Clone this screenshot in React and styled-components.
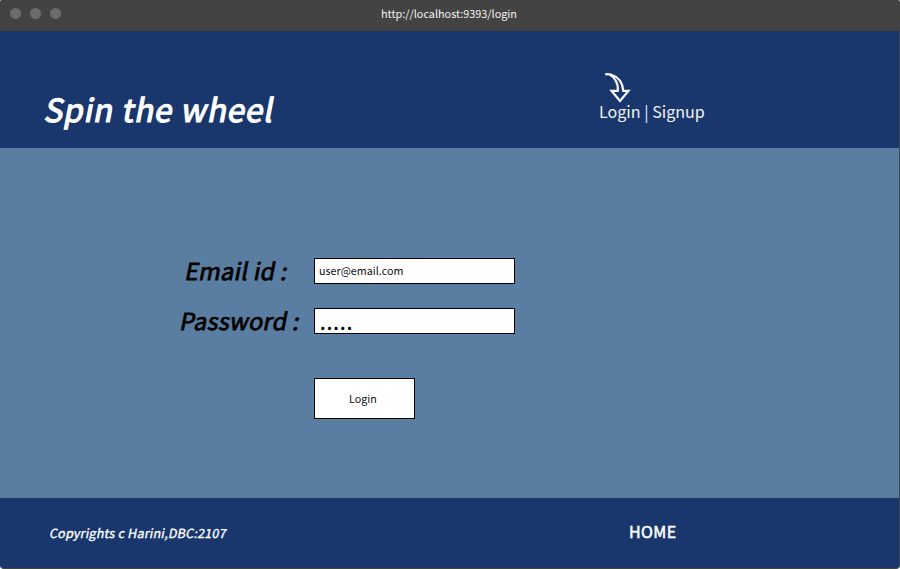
import React from "react";
import styled, { createGlobalStyle } from "styled-components";

const GlobalStyle = createGlobalStyle`
  * { box-sizing: border-box; }
  body { margin: 0; background: #fff; font-family: "Noto Sans CJK SC", "Noto Sans", sans-serif; }
`;

const Window = styled.div`
  width: 900px;
  height: 569px;
  display: flex;
  flex-direction: column;
  overflow: hidden;
  background: #5a7da2;
  border: solid #434343;
  border-width: 0 1px 1px 0;
  border-radius: 2px 2px 4px 4px;
`;

const TitleBar = styled.div`
  height: 31px;
  flex: none;
  display: grid;
  grid-template-columns: 381px 1fr;
  margin-right: -1px;
  background: #434343;
`;

const Dots = styled.div`
  display: flex;
  gap: 9px;
  padding: 8px 0 0 10px;
`;

const Dot = styled.span`
  width: 11px;
  height: 10.5px;
  border-radius: 50%;
  background: #6b6b6b;
`;

const Address = styled.span`
  color: #f4f4f4;
  font-size: 10.85px;
  line-height: 26px;
  white-space: nowrap;
`;

const Header = styled.header`
  height: 117px;
  flex: none;
  display: grid;
  grid-template-columns: 599px 1fr;
  background: #19376c;
`;

const Slanted = styled.span`
  display: block;
  width: max-content;
  white-space: nowrap;
  transform: skewX(-11deg);
  transform-origin: 0 70%;
  -webkit-text-stroke: ${(p) => p.$stroke}px currentColor;
`;

const Title = styled.h1`
  margin: 52px 0 0 44px;
  color: #fff;
  font-size: 31.6px;
  font-weight: 400;
  letter-spacing: 0.75px;
  word-spacing: 0.6px;
  line-height: 50px;
`;

const Nav = styled.nav`
  padding-top: 41px;
  color: #eef1f5;
  font-size: 16.1px;
  line-height: 24px;
`;

const Arrow = styled.svg`
  display: block;
  width: 28px;
  height: 32px;
  margin: 0 0 -5px 5px;
`;

const Form = styled.form`
  flex: 1;
  padding-top: 110px;
`;

const Field = styled.div`
  display: grid;
  grid-template-columns: ${(p) => p.$indent}px ${(p) => 314 - p.$indent}px 201px;
  height: 26px;
  margin-bottom: 24px;
`;

const Label = styled.label`
  grid-column: 2;
  color: #000;
  font-size: 23.3px;
  letter-spacing: 0.35px;
  line-height: 24px;
`;

const Input = styled.input`
  width: 201px;
  height: 26px;
  padding: ${(p) => (p.$masked ? "2px 0 0 5px" : "0 4px 2px")};
  border: 1px solid #000;
  outline: 0;
  background: #fff;
  color: ${(p) => (p.$masked ? "#000" : "#111")};
  font-family: inherit;
  font-size: ${(p) => (p.$masked ? 17 : 10.75)}px;
  font-weight: ${(p) => (p.$masked ? 700 : 400)};
  letter-spacing: ${(p) => (p.$masked ? 1.15 : 0)}px;
`;

const Button = styled.button`
  display: block;
  width: 101px;
  height: 41px;
  margin: 44px 0 0 314px;
  padding: 0 3px 0 0;
  border: 1px solid #000;
  background: #fff;
  color: #111;
  font-family: inherit;
  font-size: 10.75px;
`;

const Footer = styled.footer`
  height: 70px;
  flex: none;
  display: grid;
  grid-template-columns: 580px 1fr;
  padding: 21px 0 0 49px;
  background: #19376c;
  color: #fff;
`;

const Copyright = styled.div`
  font-size: 12.5px;
  letter-spacing: 0.24px;
  line-height: 28px;
`;

const Home = styled.div`
  font-size: 16px;
  letter-spacing: 0.4px;
  line-height: 24px;
  -webkit-text-stroke: 0.5px currentColor;
`;

export default function App() {
  return (
    <>
      <GlobalStyle />
      <Window>
        <TitleBar>
          <Dots><Dot /><Dot /><Dot /></Dots>
          <Address>http://localhost:9393/login</Address>
        </TitleBar>
        <Header>
          <Title><Slanted $stroke={1.2}>Spin the wheel</Slanted></Title>
          <Nav>
            <Arrow viewBox="0 0 28 32" fill="none" stroke="#f4f6fa" strokeWidth="2.2" strokeLinejoin="miter">
              <path d="M1.2 2.3C3 2 5.5 2 7.5 2.8C14.5 5 18.5 10 19.3 18.8H24.5L16 29L7.5 18.8H13.8C14.5 11 10.5 5 5.5 2.6" />
            </Arrow>
            Login | Signup
          </Nav>
        </Header>
        <Form>
          <Field $indent={185}>
            <Label><Slanted $stroke={0.8}>Email id :</Slanted></Label>
            <Input defaultValue="user@email.com" />
          </Field>
          <Field $indent={180}>
            <Label><Slanted $stroke={0.8}>Password :</Slanted></Label>
            <Input $masked defaultValue="....." />
          </Field>
          <Button type="button">Login</Button>
        </Form>
        <Footer>
          <Copyright><Slanted $stroke={0.35}>Copyrights c Harini,DBC:2107</Slanted></Copyright>
          <Home>HOME</Home>
        </Footer>
      </Window>
    </>
  );
}
